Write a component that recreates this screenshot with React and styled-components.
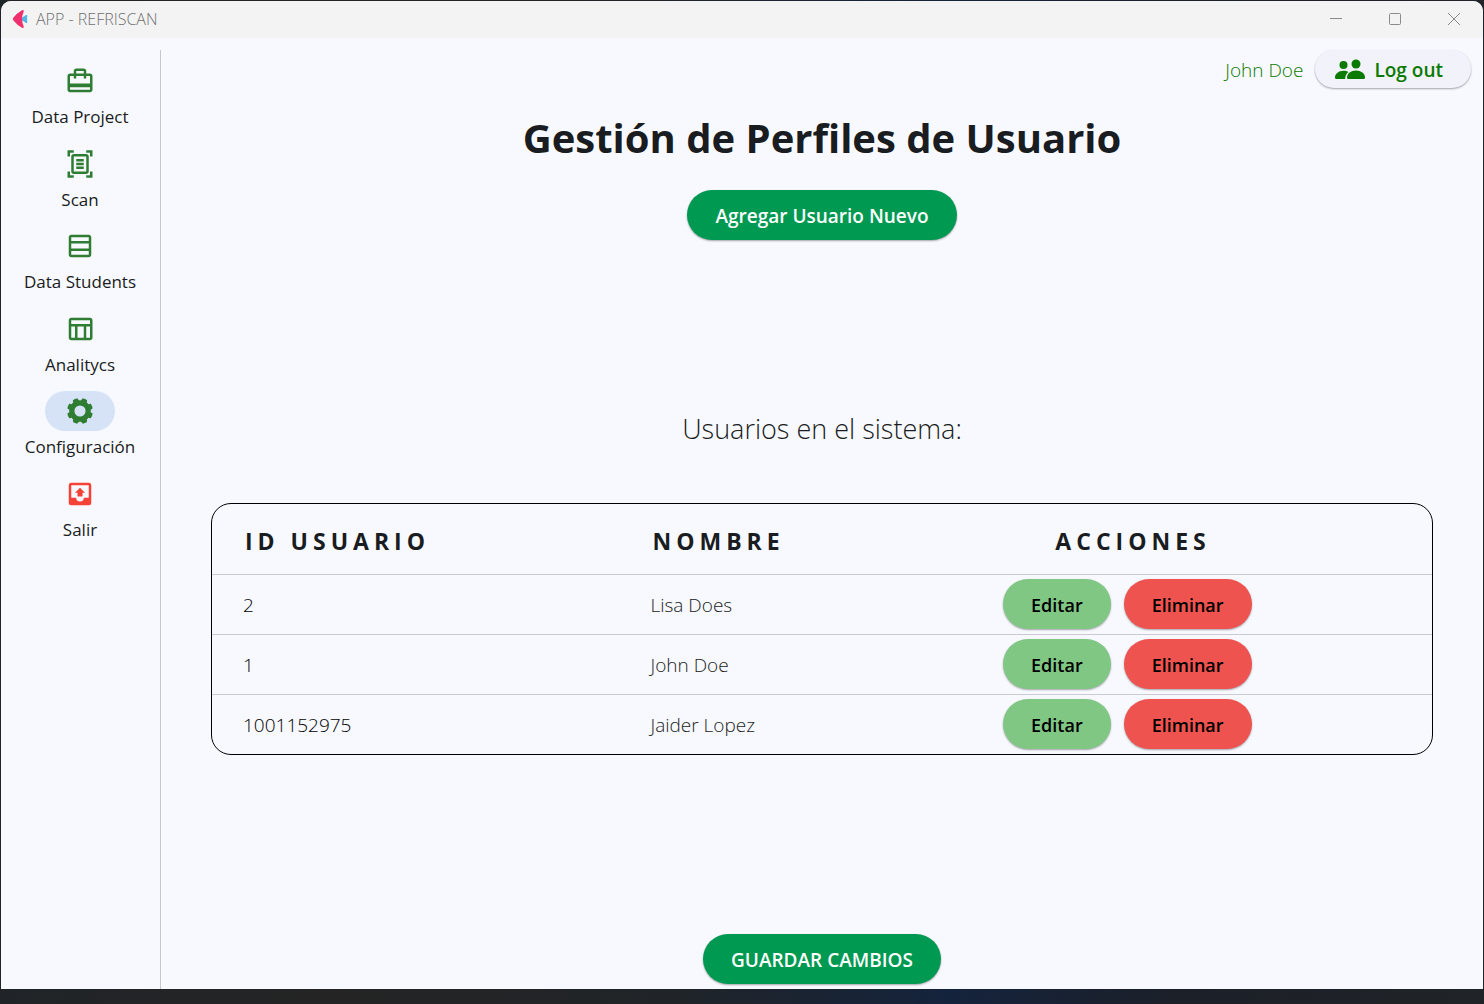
import React from "react";
import styled, { createGlobalStyle } from "styled-components";
import {
  MdOutlineCardTravel,
  MdOutlineDocumentScanner,
  MdOutlineTableRows,
  MdOutlineTableChart,
} from "react-icons/md";

const GlobalStyle = createGlobalStyle`
  * { box-sizing: border-box; }
  body {
    margin: 0;
    background: #202327;
    color: #191c20;
    font-family: "Open Sans", "Noto Sans", sans-serif;
  }
  button { font-family: inherit; border: 0; cursor: pointer; }
`;

const Desktop = styled.div`
  display: flex;
  min-height: 100vh;
  padding: 1px 1px 15px;
  background: linear-gradient(90deg, #202428 0%, #242424 22%, #202428 45%, #14233c 64%, #1c2028 80%, #202327 100%);
`;

const Window = styled.div`
  flex: 1;
  display: flex;
  flex-direction: column;
  border-radius: 10px 10px 0 0;
  overflow: hidden;
  background: #f8f9ff;
`;

const TitleBar = styled.header`
  display: flex;
  align-items: center;
  justify-content: space-between;
  height: 37px;
  padding: 0 0 2px 11px;
  background: #f3f3f3;
`;

const AppTitle = styled.div`
  display: flex;
  align-items: center;
  gap: 7px;
  font-size: 16px;
  line-height: 20px;
  font-weight: 300;
  color: #707070;
`;

const WindowControls = styled.div`
  display: flex;
`;

const ControlButton = styled.button`
  display: grid;
  place-items: center;
  width: 59px;
  height: 35px;
  padding: 0;
  background: transparent;
  color: #8a8a8a;
`;

const Body = styled.div`
  flex: 1;
  display: flex;
`;

const Sidebar = styled.nav`
  width: 160px;
  margin-top: 12px;
  padding: 11px 1px 0 0;
  border-right: 1px solid #c3c7cf;
`;

const NavList = styled.ul`
  display: grid;
  grid-auto-rows: 1fr;
  min-height: 495px;
  margin: 0;
  padding: 0;
  list-style: none;
`;

const NavButton = styled.button`
  display: flex;
  flex-direction: column;
  align-items: center;
  gap: 4px;
  width: 100%;
  padding: 0;
  background: transparent;
  color: #191c20;
  font-size: 17px;
  line-height: 24px;
  font-weight: 500;
`;

const Indicator = styled.span`
  display: grid;
  place-items: center;
  width: 70px;
  height: 40px;
  border-radius: 20px;
  background: ${(p) => (p.$active ? "#d6e3f7" : "transparent")};
  color: ${(p) => p.$color};
  font-size: 30px;
`;

const Main = styled.main`
  flex: 1;
  display: flex;
  flex-direction: column;
  align-items: center;
  padding: 12px 0 5px;
`;

const UserBar = styled.div`
  align-self: flex-end;
  display: flex;
  align-items: center;
  gap: 12px;
  margin-right: 12px;
  color: #0a7a00;
  font-size: 19px;
  line-height: 26px;
  font-weight: 350;
`;

const UserName = styled.span`
  padding-top: 2px;
`;

const Pill = styled.button`
  display: inline-flex;
  align-items: center;
  justify-content: center;
  height: 50px;
  padding: 2px 28px 0;
  border-radius: 25px;
  background: ${(p) => p.$bg};
  color: ${(p) => p.$fg || "#000"};
  font-size: 18px;
  line-height: 26px;
  font-weight: 600;
  box-shadow: 0 1px 2px rgba(0, 0, 0, 0.35);
`;

const PrimaryPill = styled(Pill)`
  font-size: 19px;
`;

const LogoutPill = styled(Pill)`
  gap: 9px;
  height: 38px;
  padding: 2px 28px 0 20px;
  font-size: 19px;
`;

const Title = styled.h1`
  margin: 20px 0 22px;
  font-size: 40px;
  line-height: 60px;
  font-weight: 700;
`;

const Subtitle = styled.h2`
  margin: 169px 0 54px;
  font-size: 27px;
  line-height: 40px;
  font-weight: 350;
`;

const TableFrame = styled.div`
  align-self: stretch;
  margin: 0 50px;
  border: 1px solid #000;
  border-radius: 20px;
  overflow: hidden;
`;

const Table = styled.table`
  width: 100%;
  border-collapse: collapse;
  table-layout: fixed;
  text-align: left;
`;

const HeadCell = styled.th`
  width: ${(p) => p.$width};
  height: 70px;
  padding: 4px 0 0 ${(p) => (p.$actions ? 31 : 33)}px;
  font-size: 23px;
  line-height: 30px;
  font-weight: 700;
  letter-spacing: 5px;
`;

const ActionsHeading = styled.span`
  display: block;
  width: 260px;
  text-align: center;
`;

const Row = styled.tr`
  border-top: 1px solid #c9cad4;
`;

const Cell = styled.td`
  height: 60px;
  padding: 2px 0 0 31px;
  font-size: 19px;
  line-height: 26px;
  font-weight: 350;
  color: ${(p) => (p.$strong ? "#000" : "#191c20")};
`;

const ActionsCell = styled(Cell)`
  padding-top: 0;
`;

const Actions = styled.div`
  display: flex;
  gap: 13px;
`;

const RowPill = styled(Pill)`
  font-weight: 550;
`;

const Footer = styled.footer`
  margin-top: auto;
`;

const Gear = () => (
  <svg width="30" height="30" viewBox="-15 -15 30 30" aria-hidden="true">
    <circle r="8.200" fill="none" stroke="currentColor" strokeWidth="5.200" />
    {[0, 1, 2, 3, 4, 5, 6, 7].map((n) => (
      <rect
        key={n}
        x="-2.900"
        y="-12.900"
        width="5.800"
        height="5"
        rx="1.600"
        fill="currentColor"
        transform={`rotate(${22.5 + n * 45})`}
      />
    ))}
  </svg>
);

const Outbox = () => (
  <svg width="30" height="30" viewBox="0 0 24 24" fill="currentColor" aria-hidden="true">
    <path
      fillRule="evenodd"
      d="M19 3H5a2 2 0 0 0-2 2v14a2 2 0 0 0 2 2h14a2 2 0 0 0 2-2V5a2 2 0 0 0-2-2zM19 15h-4a3 3 0 0 1-6 0H5V5h14z"
    />
    <path d="M8 11h2v3h4v-3h2l-4-4z" />
  </svg>
);

const Logo = () => (
  <svg width="17" height="20" viewBox="0 0 17 20" aria-hidden="true">
    <path d="M8 10 L14 6 Q15.500 5.500 15.300 7 Q14.800 10 15.300 13 Q15.500 14.500 14 14 Z" fill="#54b6e8" />
    <path d="M1.300 8.800 Q5 4 10 1.200 Q12.500 .4 11.600 3 Q8.500 10 11.600 17 Q12.500 19.600 10 18.800 Q5 16 1.300 11.200 Q.4 10 1.300 8.800Z" fill="#f0306c" />
  </svg>
);

const People = () => (
  <svg width="30" height="22" viewBox="0 0 30 22" fill="currentColor" aria-hidden="true">
    <circle cx="8.500" cy="6" r="4" />
    <circle cx="21" cy="5" r="4.500" />
    <path d="M0 18.500C0 14.500 4 11.700 8.500 11.700c2 0 3.600.4 5 1.300-2.200 1.700-3.300 3.800-3.300 7H2C.7 20 0 19.500 0 18.500z" />
    <path d="M12 18.500c0-4 4-7 9-7s9 3 9 7c0 1-.6 1.500-1.800 1.500H13.800c-1.200 0-1.800-.5-1.800-1.500z" />
  </svg>
);

const NAV = [
  { label: "Data Project", Icon: MdOutlineCardTravel },
  { label: "Scan", Icon: MdOutlineDocumentScanner },
  { label: "Data Students", Icon: MdOutlineTableRows },
  { label: "Analitycs", Icon: MdOutlineTableChart },
  { label: "Configuración", Icon: Gear, active: true },
  { label: "Salir", Icon: Outbox, color: "#f44336" },
];

const USERS = [
  { id: "2", name: "Lisa Does" },
  { id: "1", name: "John Doe" },
  { id: "1001152975", name: "Jaider Lopez" },
];

export default function App() {
  return (
    <>
      <GlobalStyle />
      <Desktop>
        <Window>
          <TitleBar>
            <AppTitle>
              <Logo />
              APP - REFRISCAN
            </AppTitle>
            <WindowControls>
              <ControlButton aria-label="Minimizar">
                <svg width="12" height="12" viewBox="0 0 12 12" stroke="currentColor">
                  <path d="M0 5.500h12" />
                </svg>
              </ControlButton>
              <ControlButton aria-label="Maximizar">
                <svg width="12" height="12" viewBox="0 0 12 12" stroke="currentColor" fill="none">
                  <rect x="0.500" y="0.500" width="11" height="11" rx="1" />
                </svg>
              </ControlButton>
              <ControlButton aria-label="Cerrar">
                <svg width="12" height="12" viewBox="0 0 12 12" stroke="currentColor">
                  <path d="M0 0l12 12M12 0L0 12" />
                </svg>
              </ControlButton>
            </WindowControls>
          </TitleBar>
          <Body>
            <Sidebar>
              <NavList>
                {NAV.map(({ label, Icon, active, color = "#2e7d32" }) => (
                  <li key={label}>
                    <NavButton aria-current={active ? "page" : undefined}>
                      <Indicator $active={active} $color={color}>
                        <Icon />
                      </Indicator>
                      {label}
                    </NavButton>
                  </li>
                ))}
              </NavList>
            </Sidebar>
            <Main>
              <UserBar>
                <UserName>John Doe</UserName>
                <LogoutPill $bg="#f1f2fa" $fg="#0a7a00">
                  <People />
                  Log out
                </LogoutPill>
              </UserBar>
              <Title>Gestión de Perfiles de Usuario</Title>
              <PrimaryPill $bg="#009951" $fg="#fff">Agregar Usuario Nuevo</PrimaryPill>
              <Subtitle>Usuarios en el sistema:</Subtitle>
              <TableFrame>
                <Table>
                  <thead>
                    <tr>
                      <HeadCell $width="33.4%">ID USUARIO</HeadCell>
                      <HeadCell $width="28.9%">NOMBRE</HeadCell>
                      <HeadCell $width="37.7%" $actions>
                        <ActionsHeading>ACCIONES</ActionsHeading>
                      </HeadCell>
                    </tr>
                  </thead>
                  <tbody>
                    {USERS.map((user) => (
                      <Row key={user.id}>
                        <Cell $strong>{user.id}</Cell>
                        <Cell>{user.name}</Cell>
                        <ActionsCell>
                          <Actions>
                            <RowPill $bg="#81c784">Editar</RowPill>
                            <RowPill $bg="#ef5350">Eliminar</RowPill>
                          </Actions>
                        </ActionsCell>
                      </Row>
                    ))}
                  </tbody>
                </Table>
              </TableFrame>
              <Footer>
                <PrimaryPill $bg="#009951" $fg="#fff">GUARDAR CAMBIOS</PrimaryPill>
              </Footer>
            </Main>
          </Body>
        </Window>
      </Desktop>
    </>
  );
}
